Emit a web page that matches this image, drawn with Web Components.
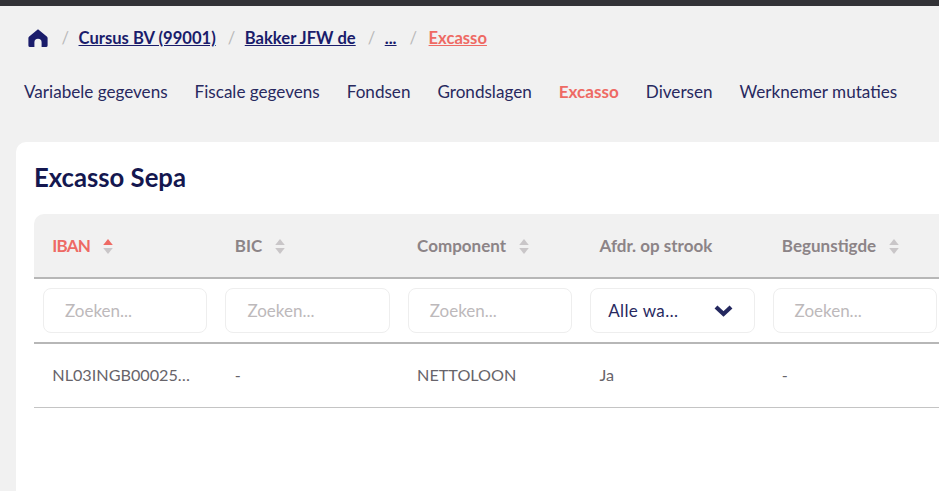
<!DOCTYPE html>
<html lang="nl">
<head>
<meta charset="utf-8">
<title>Excasso</title>
<style>
    html, body {
        margin: 0;
        height: 100%;
        overflow: hidden;
    }
    body {
        background-color: #f1f1f1;
        font-family: "Lato", "Noto Sans", sans-serif;
        color: #1d1f5c;
    }
</style>
</head>
<body>
<app-shell>
    <bread-crumbs>
        <crumb-link>Cursus BV (99001)</crumb-link>
        <crumb-link>Bakker JFW de</crumb-link>
        <crumb-link>...</crumb-link>
        <crumb-link active>Excasso</crumb-link>
    </bread-crumbs>
    <tab-nav>
        <tab-link>Variabele gegevens</tab-link>
        <tab-link>Fiscale gegevens</tab-link>
        <tab-link>Fondsen</tab-link>
        <tab-link>Grondslagen</tab-link>
        <tab-link active>Excasso</tab-link>
        <tab-link>Diversen</tab-link>
        <tab-link>Werknemer mutaties</tab-link>
    </tab-nav>
    <content-card heading="Excasso Sepa">
        <data-table>
            <sort-head active>IBAN</sort-head>
            <sort-head>BIC</sort-head>
            <sort-head>Component</sort-head>
            <sort-head nosort>Afdr. op strook</sort-head>
            <sort-head>Begunstigde</sort-head>

            <filter-cell slot="filters" placeholder="Zoeken..."></filter-cell>
            <filter-cell slot="filters" placeholder="Zoeken..."></filter-cell>
            <filter-cell slot="filters" placeholder="Zoeken..."></filter-cell>
            <filter-cell slot="filters" value="Alle wa…"></filter-cell>
            <filter-cell slot="filters" placeholder="Zoeken..."></filter-cell>

            <table-cell slot="row">NL03INGB00025…</table-cell>
            <table-cell slot="row">-</table-cell>
            <table-cell slot="row">NETTOLOON</table-cell>
            <table-cell slot="row">Ja</table-cell>
            <table-cell slot="row">-</table-cell>
        </data-table>
    </content-card>
</app-shell>

<script>
class AppShell extends HTMLElement {
    constructor() {
        super();
        this.$shadow = this.attachShadow({ mode: 'open' });
        this.$shadow.innerHTML = `
            <style>
                :host {
                    display: block;
                    height: 491px;
                    overflow: hidden;
                    border-top: 6px solid #333337;
                    box-sizing: border-box;
                }
            </style>
            <slot></slot>
        `;
    }
}

class BreadCrumbs extends HTMLElement {
    constructor() {
        super();
        this.$shadow = this.attachShadow({ mode: 'open' });
        this.$shadow.innerHTML = `
            <style>
                :host {
                    display: flex;
                    align-items: center;
                    height: 20px;
                    padding: 22px 0 0 28px;
                }
                svg {
                    width: 20px;
                    height: 18px;
                    display: block;
                    fill: #1a1c6b;
                    margin-right: 1.5px;
                }
            </style>
            <svg viewBox="0 0 20 18"><path d="M10 .3 1.2 7.4Q.4 8 .4 9v7.4Q.4 18 2 18H6.4v-4.6a3.6 3.6 0 0 1 7.2 0V18H18q1.6 0 1.6-1.6V9q0-1-.8-1.6z"/></svg>
            <slot></slot>
        `;
    }
}

class CrumbLink extends HTMLElement {
    constructor() {
        super();
        this.$shadow = this.attachShadow({ mode: 'open' });
        this.$shadow.innerHTML = `
            <style>
                :host {
                    display: inline-flex;
                    align-items: center;
                    font-size: 16.6px;
                    font-weight: 700;
                    color: #1a1c6b;
                    margin-top: -1px;
                }
                :host([active]) {
                    color: #ee6a64;
                }
                .sep {
                    color: #b9b9b9;
                    font-weight: 400;
                    margin: 0 9.5px 0 12px;
                }
                :host([active]) .sep {
                    margin: 0 11.5px 0 13px;
                }
                a {
                    text-decoration: underline;
                    white-space: nowrap;
                }
            </style>
            <span class="sep">/</span><a><slot></slot></a>
        `;
    }
}

class TabNav extends HTMLElement {
    constructor() {
        super();
        this.$shadow = this.attachShadow({ mode: 'open' });
        this.$shadow.innerHTML = `
            <style>
                :host {
                    display: flex;
                    gap: 27px;
                    height: 24px;
                    align-items: center;
                    padding: 31px 0 0 24px;
                }
            </style>
            <slot></slot>
        `;
    }
}

class TabLink extends HTMLElement {
    constructor() {
        super();
        this.$shadow = this.attachShadow({ mode: 'open' });
        this.$shadow.innerHTML = `
            <style>
                :host {
                    display: block;
                    font-size: 17.1px;
                    color: #28295f;
                    white-space: nowrap;
                }
                :host([active]) {
                    color: #ee6a64;
                    font-weight: 700;
                }
            </style>
            <slot></slot>
        `;
    }
}

class ContentCard extends HTMLElement {
    constructor() {
        super();
        this.$shadow = this.attachShadow({ mode: 'open' });
        this.$shadow.innerHTML = `
            <style>
                :host {
                    display: block;
                    width: 1100px;
                    height: 400px;
                    margin: 39px 0 0 16px;
                    padding: 17px 18px 0;
                    box-sizing: border-box;
                    background-color: #fff;
                    border-radius: 10px;
                }
                h2 {
                    margin: 0 0 19px;
                    font-size: 25.7px;
                    line-height: 36px;
                    font-weight: 700;
                    color: #14174f;
                }
            </style>
            <h2>${this.getAttribute('heading')}</h2>
            <slot></slot>
        `;
    }
}

class DataTable extends HTMLElement {
    constructor() {
        super();
        this.$shadow = this.attachShadow({ mode: 'open' });
        this.$shadow.innerHTML = `
            <style>
                :host {
                    display: block;
                }
                .row {
                    display: grid;
                    grid-template-columns: repeat(6, 182.4px);
                    box-sizing: border-box;
                }
                .head {
                    height: 65px;
                    background-color: #f1f1f1;
                    border-radius: 10px 10px 0 0;
                    border-bottom: 2px solid #b7b7b7;
                }
                .filters {
                    height: 65px;
                    border-bottom: 2px solid #b7b7b7;
                }
                .body {
                    height: 64px;
                    border-bottom: 1px solid #c4c4c4;
                }
            </style>
            <div class="row head"><slot></slot></div>
            <div class="row filters"><slot name="filters"></slot></div>
            <div class="row body"><slot name="row"></slot></div>
        `;
    }
}

class SortHead extends HTMLElement {
    constructor() {
        super();
        this.$shadow = this.attachShadow({ mode: 'open' });
        const arrows = this.hasAttribute('nosort') ? '' : `
            <svg viewBox="0 0 10 15">
                <path class="up" d="M5 0 9.8 6H.2z"/>
                <path d="M.2 9h9.6L5 15z"/>
            </svg>`;
        this.$shadow.innerHTML = `
            <style>
                :host {
                    display: flex;
                    align-items: center;
                    gap: 13px;
                    padding-left: 18.3px;
                    font-size: 17px;
                    font-weight: 700;
                    color: #8c8487;
                    white-space: nowrap;
                }
                :host([active]) {
                    color: #ee6a64;
                    letter-spacing: -.8px;
                }
                svg {
                    width: 10px;
                    height: 15px;
                    fill: #c9c6c8;
                    margin-top: 2px;
                }
                :host([active]) .up {
                    fill: #ee6a64;
                }
            </style>
            <slot></slot>${arrows}
        `;
    }
}

class FilterCell extends HTMLElement {
    constructor() {
        super();
        this.$shadow = this.attachShadow({ mode: 'open' });
        const value = this.getAttribute('value');
        const inner = value
            ? `<span class="value">${value}</span>
               <svg viewBox="0 0 19 12"><path d="M2 2 9.5 9 17 2" fill="none" stroke="#24285f" stroke-width="4.2"/></svg>`
            : `<span class="placeholder">${this.getAttribute('placeholder')}</span>`;
        this.$shadow.innerHTML = `
            <style>
                :host {
                    display: block;
                    padding: 9px 9px 0;
                }
                .box {
                    display: flex;
                    align-items: center;
                    justify-content: space-between;
                    box-sizing: border-box;
                    width: 164.4px;
                    height: 45px;
                    padding: 0 21px 0 21px;
                    border: 1px solid #eeeeee;
                    border-radius: 8px;
                    font-size: 17px;
                    white-space: nowrap;
                }
                .placeholder {
                    color: #bdb9bb;
                }
                .value {
                    color: #28295f;
                    margin-left: -4px;
                    letter-spacing: .4px;
                }
                svg {
                    width: 19px;
                    height: 12px;
                }
            </style>
            <div class="box">${inner}</div>
        `;
    }
}

class TableCell extends HTMLElement {
    constructor() {
        super();
        this.$shadow = this.attachShadow({ mode: 'open' });
        this.$shadow.innerHTML = `
            <style>
                :host {
                    display: flex;
                    align-items: center;
                    padding: 0 0 3px 18.3px;
                    font-size: 16.2px;
                    color: #67646a;
                    white-space: nowrap;
                }
            </style>
            <slot></slot>
        `;
    }
}

window.customElements.define('app-shell', AppShell);
window.customElements.define('bread-crumbs', BreadCrumbs);
window.customElements.define('crumb-link', CrumbLink);
window.customElements.define('tab-nav', TabNav);
window.customElements.define('tab-link', TabLink);
window.customElements.define('content-card', ContentCard);
window.customElements.define('data-table', DataTable);
window.customElements.define('sort-head', SortHead);
window.customElements.define('filter-cell', FilterCell);
window.customElements.define('table-cell', TableCell);
</script>
</body>
</html>
